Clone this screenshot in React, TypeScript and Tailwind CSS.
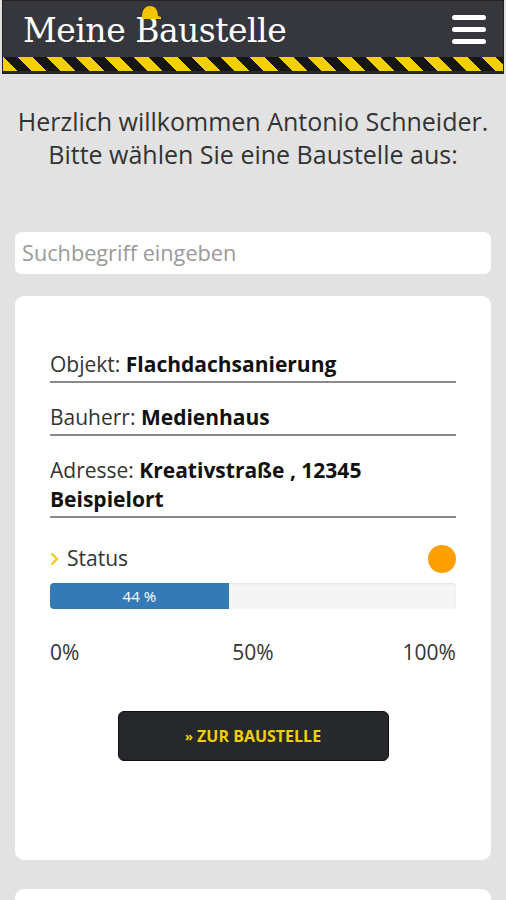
import React from "react";

const rows = [
  { label: "Objekt:", value: ["Flachdachsanierung"] },
  { label: "Bauherr:", value: ["Medienhaus"] },
  { label: "Adresse:", value: ["Kreativstraße , 12345", "Beispielort"] },
];

function HardHat() {
  return (
    <svg width="22" height="18" viewBox="0 0 22 18" className="absolute left-[137px] top-[3px]">
      <path d="M2 13 C2 6 5 2 10 2 C15 2 18 6 18 12 L21 13 L21 15 L2 15 Z" fill="#f5c400" />
      <path d="M10 2 L10 6" stroke="#e0a800" strokeWidth="1" />
    </svg>
  );
}

export default function App() {
  const progress = 44;
  return (
    <div className="min-h-screen bg-[#e2e2e2] pb-4" style={{ fontFamily: '"Open Sans", "Liberation Sans", sans-serif' }}>
      <header className="relative mx-[2px] pt-[1px] bg-[#36373c] border border-[#222]">
        <HardHat />
        <div className="flex items-center justify-between h-[55px] pl-[20px] pr-[17px]">
          <h1 className="text-[33px] leading-none text-white tracking-[-0.5px] pt-[1px]" style={{ fontFamily: '"DejaVu Serif", "Liberation Serif", serif' }}>
            Meine Baustelle
          </h1>
          <button className="flex flex-col gap-[7px]">
            <span className="block w-[34px] h-[5px] rounded-sm bg-white" />
            <span className="block w-[34px] h-[5px] rounded-sm bg-white" />
            <span className="block w-[34px] h-[5px] rounded-sm bg-white" />
          </button>
        </div>
        <div className="h-[14px] bg-[repeating-linear-gradient(45deg,#f5d000_0px,#f5d000_10px,#151515_10px,#151515_20.5px)]" />
        <div className="h-[2px] bg-[#2a2a2a]" />
      </header>

      <p className="mt-[31px] text-center text-[25px] leading-[33px] text-[#333]">
        Herzlich willkommen Antonio Schneider.
        <br />
        Bitte wählen Sie eine Baustelle aus:
      </p>

      <div className="mx-[15px] mt-[61px] h-[42px] rounded-[7px] bg-white flex items-center px-[7px]">
        <input
          className="w-full bg-transparent outline-none text-[21.7px] text-[#333] placeholder:text-[#9a9a9a]"
          placeholder="Suchbegriff eingeben"
        />
      </div>

      <div className="mx-[15px] mt-[22px] rounded-[9px] bg-white pt-[54px] pb-[99px] px-[35px]">
        {rows.map((r, i) => (
          <div key={r.label} className={"border-b-2 border-[#8a8a8a] pb-[2px] text-[21px] leading-[29px] text-[#333] " + (i > 0 ? "mt-[20px]" : "")}>
            <span>{r.label}</span>{" "}
            <span className="font-bold text-[#111]">{r.value[0]}</span>
            {r.value[1] && (
              <>
                <br />
                <span className="font-bold text-[#111]">{r.value[1]}</span>
              </>
            )}
          </div>
        ))}

        <div className="mt-[27px] flex items-center justify-between h-[28px]">
          <div className="flex items-center gap-[8px] text-[21px] text-[#333]">
            <svg width="9" height="14" viewBox="0 0 9 14">
              <path d="M1.5 1.5 L7 7 L1.5 12.5" fill="none" stroke="#f5c800" strokeWidth="2.2" />
            </svg>
            Status
          </div>
          <span className="block w-[28px] h-[28px] rounded-full bg-[#ffa000]" />
        </div>

        <div className="mt-[10px] h-[26px] rounded-[4px] bg-[#f5f5f5] overflow-hidden shadow-[inset_0_1px_2px_rgba(0,0,0,0.08)]">
          <div className="h-full bg-[#337ab7] flex items-center justify-center text-[15px] text-white" style={{ width: `${progress}%` }}>
            {progress} %
          </div>
        </div>

        <div className="mt-[29px] grid grid-cols-3 text-[21px] leading-[29px] text-[#333]">
          <span className="text-left">0%</span>
          <span className="text-center">50%</span>
          <span className="text-right">100%</span>
        </div>

        <div className="mt-[44px] flex justify-center">
          <button className="w-[271px] h-[50px] rounded-[6px] bg-[#27282c] border border-[#111] text-[#f0d000] font-bold text-[16px]">
            <span className="text-[13px] align-[1px]">»</span> ZUR BAUSTELLE
          </button>
        </div>
      </div>

      <div className="mx-[15px] mt-[29px] h-[60px] rounded-[9px] bg-white" />
    </div>
  );
}
